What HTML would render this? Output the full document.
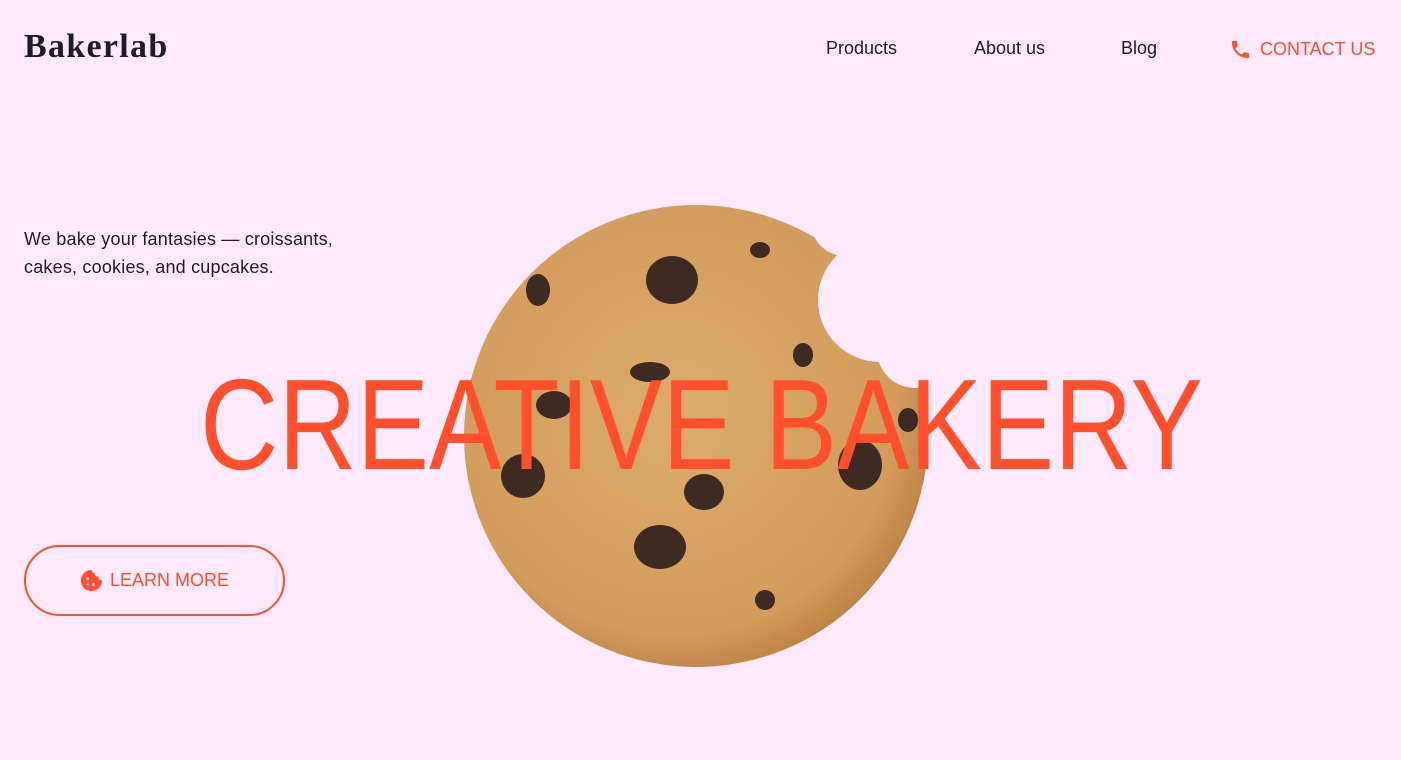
<!DOCTYPE html>
<html><head><meta charset="utf-8"><style>
html,body{margin:0;padding:0}
body{width:1401px;height:760px;background:#feeafc;position:relative;overflow:hidden;font-family:"Liberation Sans",sans-serif;color:#1f1b2b}
.logo{position:absolute;left:24px;top:28px;font-family:"Liberation Serif",serif;font-weight:bold;font-size:34px;letter-spacing:1.3px;color:#1f1b2b}
.nav{position:absolute;top:38px;font-size:18px}
.contact{color:#ff4f2d}
.tag{position:absolute;left:24px;top:225px;font-size:18px;line-height:28px;letter-spacing:0.2px}
.btn{position:absolute;left:24px;top:545px;width:257px;height:67px;border:2px solid #ff4f2d;border-radius:36px;color:#ff4f2d;font-size:18px;display:flex;align-items:center;justify-content:center;gap:7px}
svg.main{position:absolute;left:0;top:0}
</style></head><body>
<div class="logo">Bakerlab</div>
<div class="nav" style="left:826px">Products</div>
<div class="nav" style="left:974px">About us</div>
<div class="nav" style="left:1121px">Blog</div>
<div class="nav contact" style="left:1229px;display:flex;align-items:center;gap:8px">
<svg width="23" height="23" viewBox="0 0 24 24"><path fill="#ff4f2d" d="M6.6 10.8c1.4 2.8 3.8 5.1 6.6 6.6l2.2-2.2c.3-.3.7-.4 1-.2 1.1.4 2.3.6 3.6.6.6 0 1 .4 1 1V20c0 .6-.4 1-1 1C10.6 21 3 13.4 3 4c0-.6.4-1 1-1h3.5c.6 0 1 .4 1 1 0 1.3.2 2.5.6 3.6.1.3 0 .7-.2 1z"/></svg>CONTACT US</div>
<div class="tag">We bake your fantasies — croissants,<br>cakes, cookies, and cupcakes.</div>
<svg class="main" width="1401" height="760">
<defs>
<radialGradient id="cg" cx="45%" cy="45%" r="60%"><stop offset="0" stop-color="#dcac6c"/><stop offset="0.8" stop-color="#d29c5c"/><stop offset="1" stop-color="#b97c40"/></radialGradient>
<mask id="bite"><rect width="1401" height="760" fill="#fff"/>
<circle cx="880" cy="300" r="62" fill="#000"/><circle cx="915" cy="350" r="38" fill="#000"/><circle cx="845" cy="222" r="34" fill="#000"/></mask>
</defs>
<g mask="url(#bite)">
<ellipse cx="696" cy="436" rx="232" ry="231" fill="url(#cg)"/>
<g fill="#3d2a22">
<ellipse cx="672" cy="280" rx="26" ry="24"/><ellipse cx="538" cy="290" rx="12" ry="16"/>
<ellipse cx="554" cy="405" rx="18" ry="14"/><ellipse cx="523" cy="476" rx="22" ry="22"/>
<ellipse cx="660" cy="547" rx="26" ry="22"/><ellipse cx="704" cy="492" rx="20" ry="18"/>
<ellipse cx="860" cy="465" rx="22" ry="25"/><ellipse cx="765" cy="600" rx="10" ry="10"/>
<ellipse cx="650" cy="372" rx="20" ry="10"/><ellipse cx="803" cy="355" rx="10" ry="12"/>
<ellipse cx="908" cy="420" rx="10" ry="12"/><ellipse cx="760" cy="250" rx="10" ry="8"/>
</g></g>
<text x="200" y="469" textLength="1003" lengthAdjust="spacingAndGlyphs" font-family="Liberation Sans" font-size="129" fill="#ff4f2d">CREATIVE BAKERY</text>
</svg>
<div class="btn"><svg width="23" height="23" viewBox="0 0 24 24"><path fill="#ff4f2d" d="M12 1a11 11 0 1 0 11 11 4 4 0 0 1-4-4 4 4 0 0 1-4-4 3 3 0 0 1-3-3z"/><circle cx="8" cy="10" r="1.5" fill="#feeafc"/><circle cx="14" cy="16" r="1.5" fill="#feeafc"/><circle cx="8" cy="16" r="1.2" fill="#feeafc"/></svg>LEARN MORE</div>
</body></html>
